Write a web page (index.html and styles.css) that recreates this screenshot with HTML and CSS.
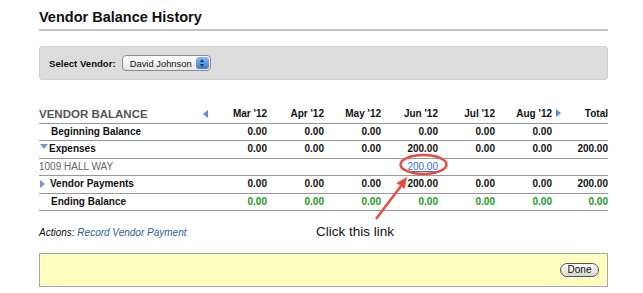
FILE: index.html
```html
<!DOCTYPE html>
<html lang="en">
<head>
	<meta charset="UTF-8">
	<title>Vendor Balance History</title>
	<link rel="stylesheet" href="styles.css">
</head>
<body>
	<div class="page">
		<h1 class="title">Vendor Balance History</h1>

		<div class="vendorBar">
			<label class="vendorLabel">Select Vendor:</label>
			<span class="fakeSelect">David Johnson<span class="stepper"><i class="up"></i><i class="down"></i></span></span>
		</div>

		<table class="balance">
			<colgroup>
				<col class="colLabel">
				<col class="colMonth"><col class="colMonth"><col class="colMonth">
				<col class="colMonth"><col class="colMonth"><col class="colMonth">
				<col class="colTotal">
			</colgroup>
			<thead>
				<tr>
					<th class="sectionName">VENDOR BALANCE<span class="arrowLeft"></span></th>
					<th>Mar '12</th>
					<th>Apr '12</th>
					<th>May '12</th>
					<th>Jun '12</th>
					<th>Jul '12</th>
					<th>Aug '12<span class="arrowRight"></span></th>
					<th>Total</th>
				</tr>
			</thead>
			<tbody>
				<tr>
					<td class="label indent">Beginning Balance</td>
					<td>0.00</td><td>0.00</td><td>0.00</td><td>0.00</td><td>0.00</td><td>0.00</td><td></td>
				</tr>
				<tr>
					<td class="label"><span class="toggleOpen"></span>Expenses</td>
					<td>0.00</td><td>0.00</td><td>0.00</td><td>200.00</td><td>0.00</td><td>0.00</td><td>200.00</td>
				</tr>
				<tr class="detail">
					<td class="label">1009 HALL WAY</td>
					<td></td><td></td><td></td><td><a href="#" class="amountLink">200.00</a></td><td></td><td></td><td></td>
				</tr>
				<tr>
					<td class="label"><span class="toggleClosed"></span>Vendor Payments</td>
					<td>0.00</td><td>0.00</td><td>0.00</td><td>200.00</td><td>0.00</td><td>0.00</td><td>200.00</td>
				</tr>
				<tr class="ending">
					<td class="label indent">Ending Balance</td>
					<td>0.00</td><td>0.00</td><td>0.00</td><td>0.00</td><td>0.00</td><td>0.00</td><td>0.00</td>
				</tr>
			</tbody>
		</table>

		<div class="actionsRow">
			<p class="actions"><em>Actions:</em> <a href="#">Record Vendor Payment</a></p>
			<p class="note">Click this link</p>
		</div>

		<div class="footerBar">
			<button class="done">Done</button>
		</div>

		<!-- annotation drawn over the table -->
		<svg class="callout" width="643" height="293" viewBox="0 0 643 293">
			<ellipse cx="423.5" cy="164.5" rx="23" ry="9.5" fill="none" stroke="#e84a3f" stroke-width="2.5"/>
			<line x1="376" y1="219" x2="401" y2="186" stroke="#e84a3f" stroke-width="2.5"/>
			<polygon points="407,177 404.5,189 396.5,183" fill="#e84a3f"/>
		</svg>
	</div>
</body>
</html>
```

FILE: styles.css
```css
body{
	margin: 0;
	background-color: #fff;
	font-family: "Liberation Sans", Arial, sans-serif;
	color: #111;
}
.page{
	position: relative;
	width: 569px;
	height: 284px;
	padding: 9px 0 0 39px;
}
.title{
	margin: 0;
	padding-bottom: 3px;
	font-size: 14.5px;
	line-height: 17px;
	font-weight: bold;
	border-bottom: 2px solid #c4c4c4;
}
.vendorBar{
	display: flex;
	align-items: center;
	gap: 6px;
	margin-top: 15px;
	height: 32px;
	padding-left: 9px;
	background-color: #dcdcdc;
	border: 1px solid #d0d0d0;
	border-radius: 3px;
}
.vendorLabel{
	font-size: 9.6px;
	font-weight: bold;
}
.fakeSelect{
	position: relative;
	display: flex;
	align-items: center;
	box-sizing: border-box;
	width: 89px;
	height: 16px;
	padding-left: 7px;
	font-size: 9.4px;
	background: linear-gradient(#ffffff, #e6e6e6);
	border: 1px solid #8c8c8c;
	border-radius: 4px;
}
.stepper{
	position: absolute;
	right: 1px;
	top: 1px;
	width: 13px;
	height: 12px;
	border-radius: 3px;
	background: linear-gradient(#8cb8ef, #3f7bd4);
	display: flex;
	flex-direction: column;
	align-items: center;
	justify-content: center;
	gap: 2px;
}
.stepper i{
	width: 0;
	height: 0;
	border-left: 2px solid transparent;
	border-right: 2px solid transparent;
}
.stepper .up{
	border-bottom: 3px solid #1b2f55;
}
.stepper .down{
	border-top: 3px solid #1b2f55;
}
.balance{
	margin-top: 14px;
	width: 569px;
	table-layout: fixed;
	border-collapse: collapse;
	font-size: 10px;
}
.colLabel{
	width: 171px;
}
.colMonth{
	width: 57px;
}
.colTotal{
	width: 56px;
}
.balance th{
	height: 26px;
	padding: 0 0 3px 0;
	vertical-align: bottom;
	text-align: right;
	font-weight: bold;
	line-height: 12px;
	border-bottom: 1px solid #999;
	white-space: nowrap;
}
.balance th.sectionName{
	text-align: left;
	font-size: 11.5px;
	color: #555;
}
.arrowLeft{
	float: right;
	margin: 2px 2px 0 0;
	width: 0;
	height: 0;
	border-top: 4px solid transparent;
	border-bottom: 4px solid transparent;
	border-right: 5px solid #5b8fd4;
}
.arrowRight{
	display: inline-block;
	margin: 0 -9px 0 4px;
	width: 0;
	height: 0;
	border-top: 4px solid transparent;
	border-bottom: 4px solid transparent;
	border-left: 5px solid #5b8fd4;
}
.balance td{
	padding: 0;
	line-height: 16.4px;
	text-align: right;
	font-weight: bold;
	border-bottom: 1px solid #999;
	white-space: nowrap;
}
.balance td.label{
	text-align: left;
}
.balance td.indent{
	padding-left: 12px;
}
.toggleOpen{
	display: inline-block;
	vertical-align: 3px;
	margin: 0 1px 0 1px;
	width: 0;
	height: 0;
	border-left: 4.5px solid transparent;
	border-right: 4.5px solid transparent;
	border-top: 5px solid #6d9ad6;
}
.toggleClosed{
	display: inline-block;
	vertical-align: -1px;
	margin: 0 5px 0 1px;
	width: 0;
	height: 0;
	border-top: 4.5px solid transparent;
	border-bottom: 4.5px solid transparent;
	border-left: 5px solid #6d9ad6;
}
.detail td{
	font-weight: normal;
}
.detail td.label{
	color: #666;
}
.amountLink{
	color: #3d6fd6;
}
.ending td{
	color: #229a22;
}
.ending td.label{
	color: #111;
}
.actionsRow{
	display: grid;
	grid-template-columns: 277px 1fr;
	align-items: baseline;
	margin-top: 13px;
	height: 16px;
}
.actions{
	margin: 0;
	font-size: 10px;
	font-style: italic;
}
.actions em{
	color: #111;
}
.actions a{
	color: #2d5c9b;
	text-decoration: none;
}
.note{
	margin: 0;
	font-size: 13.5px;
	line-height: 16px;
	color: #111;
}
.footerBar{
	display: flex;
	align-items: center;
	justify-content: flex-end;
	margin-top: 13px;
	height: 32px;
	padding-right: 8px;
	background-color: #ffffc0;
	border: 1px solid #a8a8a8;
}
.done{
	box-sizing: border-box;
	width: 39px;
	height: 14px;
	padding: 0;
	font-family: "Liberation Sans", Arial, sans-serif;
	font-size: 10px;
	line-height: 12px;
	color: #111;
	background: linear-gradient(#ffffff, #d6d6d6);
	border: 1px solid #555;
	border-radius: 7px;
}
.callout{
	position: absolute;
	left: 0;
	top: 0;
	pointer-events: none;
}
```
